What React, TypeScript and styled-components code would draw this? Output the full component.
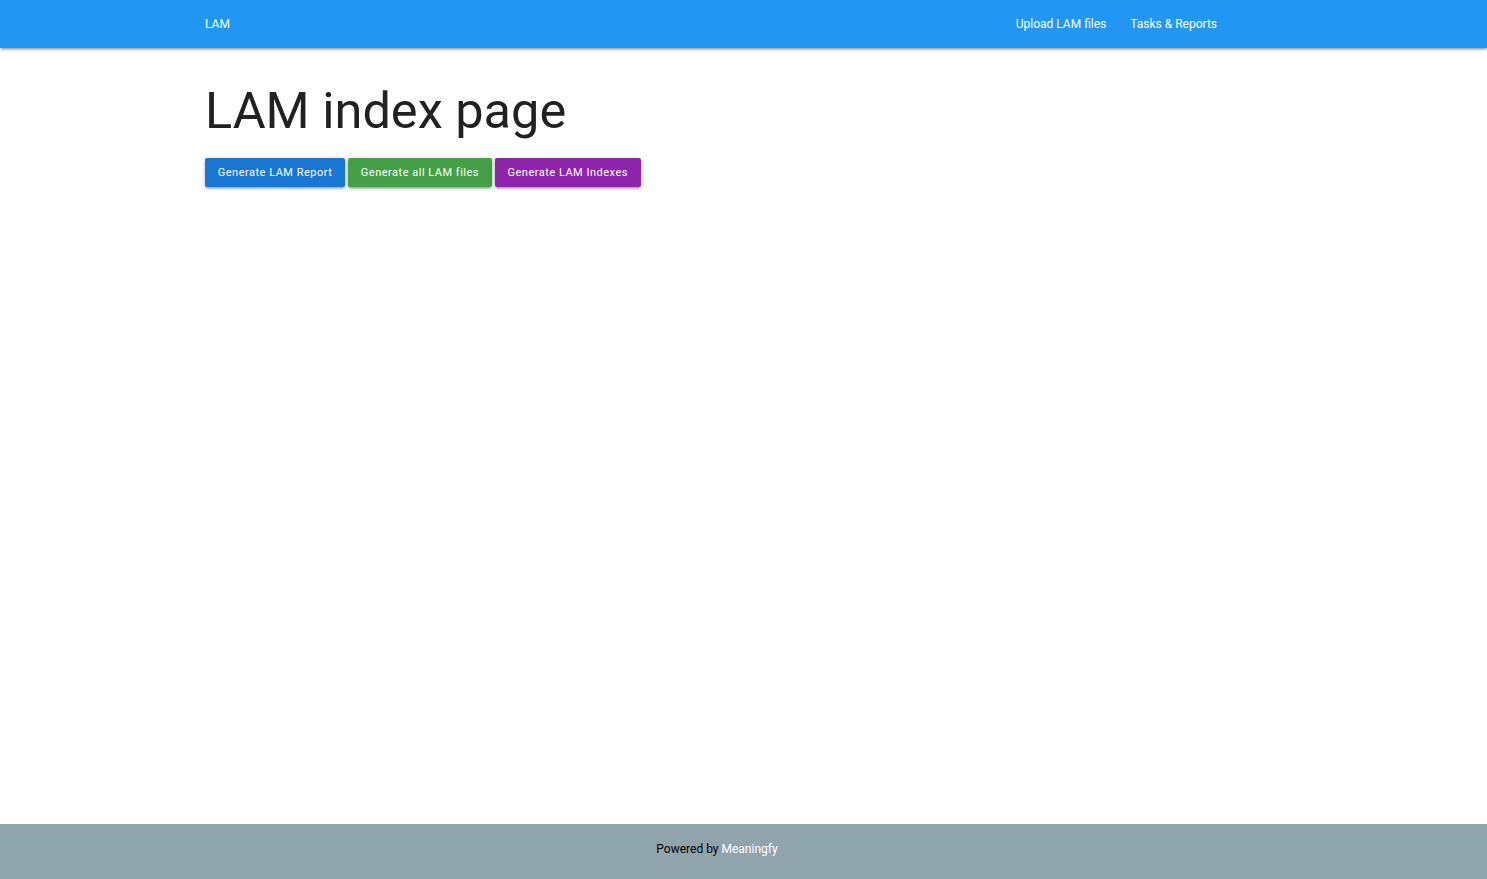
import React from 'react';
import styled, { createGlobalStyle } from 'styled-components';

const COLORS = {
  nav: '#2196f3',
  footer: '#90a4ae',
  text: '#212121',
  blue: '#1976d2',
  green: '#43a047',
  purple: '#8e24aa',
};

const GlobalStyle = createGlobalStyle`
  html, body {
    margin: 0;
    padding: 0;
    height: 100%;
  }
  body {
    font-family: Roboto, 'Liberation Sans', sans-serif;
    color: ${COLORS.text};
  }
  #root {
    min-height: 100vh;
    display: flex;
    flex-direction: column;
  }
  * {
    box-sizing: border-box;
  }
`;

const Container = styled.div`
  margin-left: 205px;
  width: 1024px;
`;

const Nav = styled.nav`
  height: 48px;
  background: ${COLORS.nav};
  box-shadow: 0 2px 2px 0 rgba(0, 0, 0, 0.14), 0 3px 1px -2px rgba(0, 0, 0, 0.12),
    0 1px 5px 0 rgba(0, 0, 0, 0.2);
  position: relative;
  z-index: 1;
`;

const NavInner = styled(Container)`
  height: 100%;
  display: flex;
  justify-content: space-between;
`;

const Brand = styled.a`
  display: block;
  color: #fff;
  font-size: 12px;
  line-height: 48px;
  text-decoration: none;
`;

const NavLinks = styled.ul`
  list-style: none;
  margin: 0;
  padding: 0 12px 0 0;
  display: flex;
  gap: 24px;
`;

const NavLink = styled.a`
  display: block;
  color: #fff;
  font-size: 12px;
  line-height: 48px;
  text-decoration: none;
`;

const Main = styled(Container)`
  flex: 1;
`;

const Title = styled.h1`
  font-size: 50.5px;
  font-weight: 400;
  line-height: 1.1;
  margin: 35px 0 0;
`;

const Actions = styled.div`
  display: flex;
  gap: 3px;
  margin-top: 19px;
`;

const Button = styled.button<{ $color: string }>`
  height: 29px;
  padding: 1px 12.75px 0;
  border: none;
  border-radius: 2px;
  background: ${(p) => p.$color};
  color: #fff;
  font-family: Roboto, 'Liberation Sans', sans-serif;
  font-size: 11px;
  letter-spacing: 0.5px;
  cursor: pointer;
  box-shadow: 0 2px 2px 0 rgba(0, 0, 0, 0.14), 0 3px 1px -2px rgba(0, 0, 0, 0.12),
    0 1px 5px 0 rgba(0, 0, 0, 0.2);
`;

const Footer = styled.footer`
  height: 55px;
  background: ${COLORS.footer};
`;

const FooterInner = styled(Container)`
  height: 100%;
  display: flex;
  align-items: center;
  justify-content: center;
  padding-bottom: 6px;
  font-size: 12px;
  color: #000;
`;

const FooterLink = styled.a`
  color: #fff;
  text-decoration: none;
  margin-left: 3px;
`;

const App: React.FC = () => {
  const buttons = [
    { label: 'Generate LAM Report', color: COLORS.blue },
    { label: 'Generate all LAM files', color: COLORS.green },
    { label: 'Generate LAM Indexes', color: COLORS.purple },
  ];
  return (
    <>
      <GlobalStyle />
      <Nav>
        <NavInner>
          <Brand href="#">LAM</Brand>
          <NavLinks>
            <li>
              <NavLink href="#">Upload LAM files</NavLink>
            </li>
            <li>
              <NavLink href="#">Tasks &amp; Reports</NavLink>
            </li>
          </NavLinks>
        </NavInner>
      </Nav>
      <Main>
        <Title>LAM index page</Title>
        <Actions>
          {buttons.map((b) => (
            <Button key={b.label} $color={b.color}>
              {b.label}
            </Button>
          ))}
        </Actions>
      </Main>
      <Footer>
        <FooterInner>
          Powered by<FooterLink href="#">Meaningfy</FooterLink>
        </FooterInner>
      </Footer>
    </>
  );
};

export default App;
